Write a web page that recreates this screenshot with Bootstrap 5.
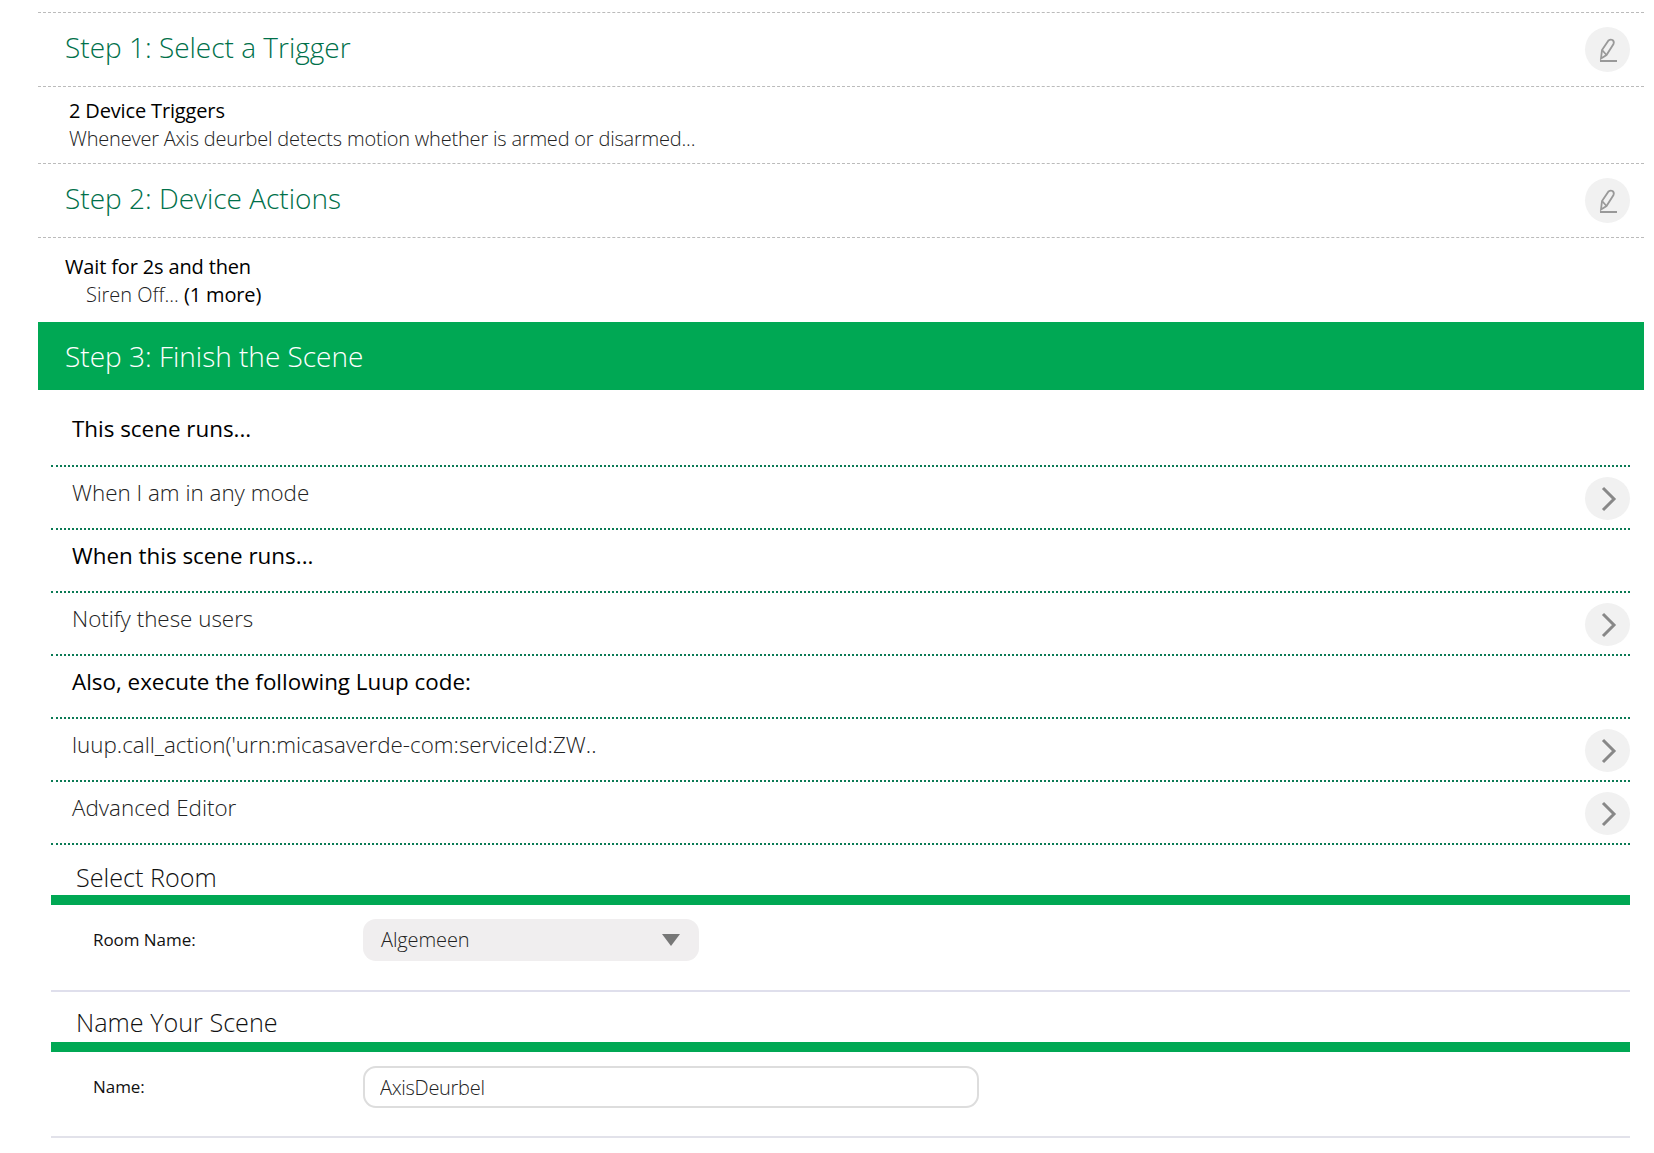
<!DOCTYPE html>
<html lang="en">
<head>
<meta charset="utf-8">
<title>Scene</title>
<link href="https://cdn.jsdelivr.net/npm/bootstrap@5.3.0/dist/css/bootstrap.min.css" rel="stylesheet">
<style>
body{font-family:"Open Sans","Liberation Sans",sans-serif;font-weight:300;color:#222;background:#fff;margin:0}
.page-wrap{padding:12px 10px 0 38px}
.step-head{height:74px;padding:0 14px 0 27px;border-top:1px dashed #bbb;font-size:28px;color:#00704a;line-height:1;font-weight:300}
.step-title{margin-bottom:6px}
.round-btn{width:45px;height:45px;border-radius:50%;background:#f1f1f1;flex:none}
.summary-a{height:77px;padding:10px 0 0 31px;border-top:1px dashed #bbb;font-size:20px;line-height:28px;letter-spacing:-.2px}
.summary-b{height:85px;padding:15px 0 0 27px;border-top:1px dashed #bbb;font-size:20px;line-height:28px}
.strong-line{color:#000;font-weight:400;letter-spacing:-.15px}
.indent-line{padding-left:21px}
.active-step{height:68px;background:#00a854;color:#fff;font-size:28px;padding-left:27px;font-weight:300}
.inner-wrap{padding:0 14px 0 13px}
.opt-row{height:63px;border-bottom:2px dotted #0b7a55;padding:0 0 10px 21px;font-size:22.4px}
.opt-row.first-row{height:77px;padding:2px 0 0 21px}
.opt-strong{color:#000;font-weight:400}
.opt-row .round-btn{margin-top:10px;height:43px;align-self:flex-start}
.sect-title{font-size:25.2px;padding:0 0 5px 25px;line-height:26px;color:#111;font-weight:300}
.green-bar{height:10px;background:#00a854}
.field-row{padding-left:42px}
.field-label{width:270px;font-size:17px;font-weight:400;color:#111;letter-spacing:-.05px}
.fake-select{width:336px;height:42px;background:#f0eeef;border-radius:13px;font-size:20px;padding:0 19px 0 18px;color:#222;letter-spacing:-.1px}
.tri{width:0;height:0;border-left:9px solid transparent;border-right:9px solid transparent;border-top:12px solid #777}
.name-input{width:616px;height:42px;border:2px solid #ddd;border-radius:13px;font-size:20px;padding:0 15px;font-weight:300;color:#222;font-family:inherit;background:#fff;letter-spacing:-.3px}
.room-block{height:147px;padding-top:19px;border-bottom:2px solid #dfdfec}
.name-block{height:146px;padding-top:17px;border-bottom:2px solid #e2e2ea}
.name-block .sect-title{padding-bottom:7px}
.field-row.mt-a{margin-top:14px}
.field-row.mt-b{margin-top:14px}
</style>
</head>
<body>
<div class="page-wrap">
  <div class="step-head d-flex align-items-center justify-content-between">
    <span class="step-title">Step 1: Select a Trigger</span>
    <span class="round-btn d-flex align-items-center justify-content-center"><svg width="24" height="26" viewBox="0 0 24 26"><g fill="none" stroke="#999" stroke-width="1.8"><path d="M5 21.5 L6 13 L12.5 3.5 Q14.5 2 16.5 3 Q18.5 4.5 17.5 7 L10.5 18 Z"/><path d="M6.5 13.5 L10.5 18"/><path d="M4 24 H21" stroke-width="2"/></g></svg></span>
  </div>
  <div class="summary-a">
    <div class="strong-line">2 Device Triggers</div>
    <div>Whenever Axis deurbel detects motion whether is armed or disarmed...</div>
  </div>
  <div class="step-head d-flex align-items-center justify-content-between">
    <span class="step-title">Step 2: Device Actions</span>
    <span class="round-btn d-flex align-items-center justify-content-center"><svg width="24" height="26" viewBox="0 0 24 26"><g fill="none" stroke="#999" stroke-width="1.8"><path d="M5 21.5 L6 13 L12.5 3.5 Q14.5 2 16.5 3 Q18.5 4.5 17.5 7 L10.5 18 Z"/><path d="M6.5 13.5 L10.5 18"/><path d="M4 24 H21" stroke-width="2"/></g></svg></span>
  </div>
  <div class="summary-b">
    <div class="strong-line">Wait for 2s and then</div>
    <div class="indent-line">Siren Off... <span class="strong-line">(1 more)</span></div>
  </div>
  <div class="active-step d-flex align-items-center"><span>Step 3: Finish the Scene</span></div>
  <div class="inner-wrap">
    <div class="opt-row first-row d-flex align-items-center justify-content-between"><span class="opt-strong">This scene runs...</span></div>
    <div class="opt-row d-flex align-items-center justify-content-between"><span>When I am in any mode</span><span class="round-btn d-flex align-items-center justify-content-center"><svg width="20" height="26" viewBox="0 0 20 26"><path d="M5 2 L16 13 L5 24" fill="none" stroke="#888" stroke-width="3"/></svg></span></div>
    <div class="opt-row d-flex align-items-center"><span class="opt-strong">When this scene runs...</span></div>
    <div class="opt-row d-flex align-items-center justify-content-between"><span>Notify these users</span><span class="round-btn d-flex align-items-center justify-content-center"><svg width="20" height="26" viewBox="0 0 20 26"><path d="M5 2 L16 13 L5 24" fill="none" stroke="#888" stroke-width="3"/></svg></span></div>
    <div class="opt-row d-flex align-items-center"><span class="opt-strong">Also, execute the following Luup code:</span></div>
    <div class="opt-row d-flex align-items-center justify-content-between"><span>luup.call_action('urn:micasaverde-com:serviceId:ZW..</span><span class="round-btn d-flex align-items-center justify-content-center"><svg width="20" height="26" viewBox="0 0 20 26"><path d="M5 2 L16 13 L5 24" fill="none" stroke="#888" stroke-width="3"/></svg></span></div>
    <div class="opt-row d-flex align-items-center justify-content-between"><span>Advanced Editor</span><span class="round-btn d-flex align-items-center justify-content-center"><svg width="20" height="26" viewBox="0 0 20 26"><path d="M5 2 L16 13 L5 24" fill="none" stroke="#888" stroke-width="3"/></svg></span></div>
    <div class="room-block">
      <div class="sect-title">Select Room</div>
      <div class="green-bar"></div>
      <div class="field-row mt-a d-flex align-items-center">
        <span class="field-label">Room Name:</span>
        <div class="fake-select d-flex align-items-center justify-content-between"><span>Algemeen</span><span class="tri"></span></div>
      </div>
    </div>
    <div class="name-block">
      <div class="sect-title">Name Your Scene</div>
      <div class="green-bar"></div>
      <div class="field-row mt-b d-flex align-items-center">
        <span class="field-label">Name:</span>
        <input class="name-input" type="text" value="AxisDeurbel">
      </div>
    </div>
  </div>
</div>
<script src="https://cdn.jsdelivr.net/npm/bootstrap@5.3.0/dist/js/bootstrap.bundle.min.js"></script>
</body>
</html>
